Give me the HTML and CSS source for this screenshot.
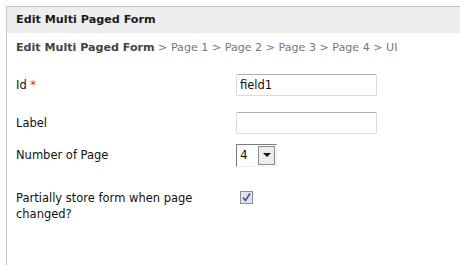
FILE: index.html
```html
<!DOCTYPE html>
<html lang="en">
<head>
  <meta charset="UTF-8">
  <title>Edit Multi Paged Form</title>
  <link rel="stylesheet" href="styles.css">
</head>
<body>

  <div class="panel">
    <div class="panel-head">Edit Multi Paged Form</div>

    <div class="crumbs">
      <strong>Edit Multi Paged Form</strong> &gt; Page 1 &gt; Page 2 &gt; Page 3 &gt; Page 4 &gt; UI
    </div>

    <div class="row row-id">
      <label class="lbl">Id <span class="req">*</span></label>
      <input class="txt" type="text" value="field1">
    </div>

    <div class="row row-label">
      <label class="lbl">Label</label>
      <input class="txt" type="text" value="">
    </div>

    <div class="row row-pages">
      <label class="lbl">Number of Page</label>
      <div class="sel">
        <span class="sel-val">4</span>
        <span class="sel-btn"><span class="arrow"></span></span>
      </div>
    </div>

    <div class="row row-store">
      <label class="lbl">Partially store form when page changed?</label>
      <span class="chk">
        <svg width="11" height="11" viewBox="0 0 11 11">
          <path d="M2 5.5 L4.5 8.5 L9 1.5" fill="none" stroke="#3b55a8" stroke-width="1.6"/>
        </svg>
      </span>
    </div>
  </div>

</body>
</html>
```

FILE: styles.css
```css
body {
  margin: 0;
  font-family: "DejaVu Sans", sans-serif;
  font-size: 11.5px;
  color: #111;
  background: #fff;
}

.panel {
  margin: 6px 0 0 6px;
  height: 259px;
  border-top: 1px solid #c4c4c4;
  border-left: 1px solid #c4c4c4;
}

.panel-head {
  height: 26px;
  line-height: 26px;
  padding-left: 9px;
  background: #eee;
  font-size: 11.2px;
  font-weight: bold;
  color: #1a1a1a;
}

.crumbs {
  margin-top: 7px;
  padding-left: 9px;
  line-height: 16px;
  font-size: 11.1px;
  color: #777;
}

.crumbs strong {
  color: #444;
}

.row {
  display: flex;
  align-items: center;
  padding-left: 9px;
}

.lbl {
  width: 220px;
  flex-shrink: 0;
}

.req {
  color: #e8203a;
}

.row-id {
  margin-top: 18px;
  height: 22px;
}

.row-label {
  margin-top: 16px;
  height: 22px;
}

.row-pages {
  margin-top: 10px;
  height: 22px;
}

.row-store {
  margin-top: 24px;
  align-items: flex-start;
}

.row-store .lbl {
  width: 205px;
  margin-right: 19px;
  line-height: 16px;
}

.txt {
  box-sizing: border-box;
  width: 141px;
  height: 22px;
  margin: 0;
  padding: 0 3px;
  border: 1px solid #d9dbe3;
  border-top-color: #abadb3;
  border-radius: 2px;
  font: inherit;
  color: #111;
  outline: none;
}

.sel {
  box-sizing: border-box;
  display: flex;
  width: 41px;
  height: 23px;
  border: 1px solid #f0f0f0;
  border-top-color: #7a7a7a;
  border-left-color: #7a7a7a;
}

.sel-val {
  flex: 1;
  padding-left: 3px;
  line-height: 20px;
  font-size: 12px;
}

.sel-btn {
  box-sizing: border-box;
  width: 17px;
  margin: 1px 1px 1px 0;
  background: #ececec;
  border: 1px solid #8a8a8a;
  display: flex;
  align-items: center;
  justify-content: center;
}

.arrow {
  width: 0;
  height: 0;
  border-left: 4px solid transparent;
  border-right: 4px solid transparent;
  border-top: 4px solid #111;
}

.chk {
  box-sizing: border-box;
  display: flex;
  align-items: center;
  justify-content: center;
  width: 13px;
  height: 13px;
  margin-top: 1px;
  border: 1px solid #8f8f8f;
  background: #dde2ee;
}
```
